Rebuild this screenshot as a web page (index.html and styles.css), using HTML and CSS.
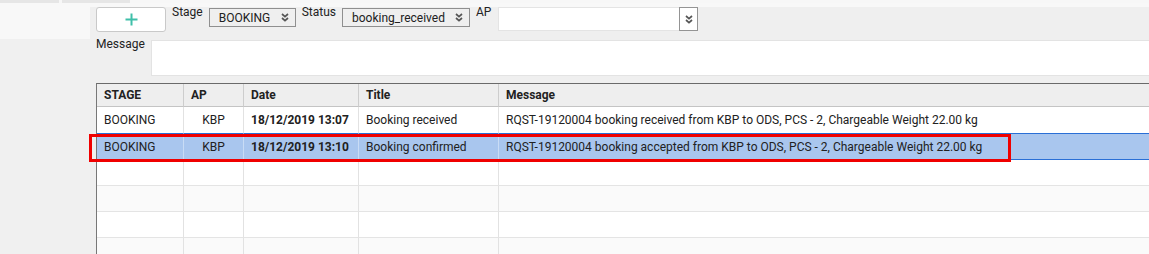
FILE: index.html
```html
<!DOCTYPE html>
<html lang="en">
<head>
<meta charset="utf-8">
<title>Booking events</title>
<link rel="stylesheet" href="styles.css">
</head>
<body>
<div class="app">
  <div class="tabstrip">
    <div class="tab tab-a"></div>
    <div class="tab tab-b"></div>
  </div>
  <div class="shell">
    <aside class="sidebar"><div class="side-top"></div></aside>
    <main class="main">
      <div class="strip"></div>
      <div class="panel">
        <div class="filters">
          <button class="add-btn" type="button" aria-label="Add">
            <svg width="13" height="13" viewBox="0 0 13 13"><path d="M6.5 0.5V12.5M0.5 6.5H12.5" stroke="#3fbfa9" stroke-width="2" fill="none"/></svg>
          </button>
          <span class="label">Stage</span>
          <div class="select sel-stage"><span>BOOKING</span><svg class="chev" width="8" height="9" viewBox="0 0 8 9"><path d="M1 1L4 3.6L7 1M1 5L4 7.6L7 5" stroke="#555" stroke-width="1.7" fill="none"/></svg></div>
          <span class="label">Status</span>
          <div class="select sel-status"><span>booking_received</span><svg class="chev" width="8" height="9" viewBox="0 0 8 9"><path d="M1 1L4 3.6L7 1M1 5L4 7.6L7 5" stroke="#555" stroke-width="1.7" fill="none"/></svg></div>
          <span class="label">AP</span>
          <div class="combo">
            <div class="combo-field"></div>
            <div class="combo-btn"><svg class="chev" width="8" height="9" viewBox="0 0 8 9"><path d="M1 1L4 3.6L7 1M1 5L4 7.6L7 5" stroke="#555" stroke-width="1.7" fill="none"/></svg></div>
          </div>
        </div>
        <div class="message-row">
          <span class="label msg-label">Message</span>
          <div class="textarea"></div>
        </div>
        <div class="grid-wrap">
          <table class="grid">
            <colgroup>
              <col class="c-stage"><col class="c-ap"><col class="c-date"><col class="c-title"><col class="c-msg">
            </colgroup>
            <thead>
              <tr><th>STAGE</th><th>AP</th><th>Date</th><th>Title</th><th class="last">Message</th></tr>
            </thead>
            <tbody>
              <tr><td>BOOKING</td><td class="ap">KBP</td><td class="date">18/12/2019 13:07</td><td>Booking received</td><td class="last">RQST-19120004 booking received from KBP to ODS, PCS - 2, Chargeable Weight 22.00 kg</td></tr>
              <tr class="selected"><td>BOOKING</td><td class="ap">KBP</td><td class="date">18/12/2019 13:10</td><td>Booking confirmed</td><td class="last">RQST-19120004 booking accepted from KBP to ODS, PCS - 2, Chargeable Weight 22.00 kg</td></tr>
              <tr><td></td><td></td><td></td><td></td><td class="last"></td></tr>
              <tr><td></td><td></td><td></td><td></td><td class="last"></td></tr>
              <tr><td></td><td></td><td></td><td></td><td class="last"></td></tr>
              <tr><td></td><td></td><td></td><td></td><td class="last"></td></tr>
            </tbody>
          </table>
        </div>
      </div>
    </main>
  </div>
  <div class="annotation"></div>
</div>
</body>
</html>
```

FILE: styles.css
```css
* { box-sizing: border-box; }
html, body { margin: 0; padding: 0; }
body {
  background: #f0f0f0;
  font-family: Roboto, "Liberation Sans", Arial, sans-serif;
  font-size: 12px;
  color: #212121;
  width: 1149px;
  height: 254px;
  overflow: hidden;
}
.app { position: relative; height: 254px; }

.tabstrip {
  height: 3px;
  background: #f7f7f7;
  display: flex;
  gap: 3px;
}
.tab { height: 3px; background: #e6e6e6; }
.tab-a { width: 59px; }
.tab-b { width: 68px; }

.shell { display: flex; height: 251px; }
.sidebar { width: 90px; flex: none; background: #f0f0f0; }
.side-top { height: 36px; background: #f8f8f8; }

.main { flex: 1; display: flex; flex-direction: column; min-width: 0; }
.strip { height: 4px; background: #f8f8f8; flex: none; }
.panel { flex: 1; background: #efefef; padding-left: 6px; }

.filters {
  height: 30px;
  display: flex;
  align-items: flex-start;
  gap: 6px;
}
.label { line-height: 10px; color: #222; }
.add-btn {
  width: 70px;
  height: 25px;
  background: #fff;
  border: 1px solid #c9c9c9;
  border-radius: 3px;
  padding: 0;
  display: flex;
  align-items: center;
  justify-content: center;
}
.select {
  margin-top: 1px;
  height: 19px;
  background: #efefef;
  border: 1px solid #8f8f8f;
  display: flex;
  align-items: center;
  justify-content: space-between;
  padding: 0 6px 0 9px;
  line-height: 14px;
}
.sel-stage { width: 87px; }
.sel-status { width: 128px; padding-right: 6px; }
.chev { display: block; }
.combo {
  margin-left: 1px;
  width: 200px;
  height: 24px;
  display: flex;
  background: #fff;
  border: 1px solid #e4e4e4;
  border-right: none;
}
.combo-field { flex: 1; }
.combo-btn {
  width: 19px;
  margin-top: -1px;
  height: 24px;
  border: 1px solid #949494;
  background: #fff;
  display: flex;
  align-items: center;
  justify-content: center;
}

.message-row {
  display: flex;
  align-items: flex-start;
  height: 39px;
}
.msg-label { line-height: 14px; width: 55px; flex: none; }
.textarea {
  margin-top: 3px;
  flex: 1;
  height: 36px;
  background: #fff;
  border: 1px solid #e3e3e3;
  border-right: none;
}

.grid-wrap {
  margin-top: 7px;
  overflow: hidden;
}
.grid {
  width: 100%;
  border-collapse: separate;
  border-spacing: 0;
  table-layout: fixed;
  border-top: 1px solid #6a6a6a;
  border-left: 1px solid #777;
  background: #fff;
}
.c-stage { width: 87px; }
.c-ap { width: 60px; }
.c-date { width: 115px; }
.c-title { width: 140px; }
.grid th {
  height: 23px;
  background: #eeeeee;
  font-weight: 700;
  text-align: left;
  padding: 0 7px;
  border-right: 1px solid #cdcdcd;
  border-bottom: 1px solid #c4c4c4;
  white-space: nowrap;
  color: #222;
}
.grid td {
  height: 26px;
  padding: 0 7px;
  border-right: 1px solid #e2e2e2;
  border-bottom: 1px solid #e4e4e4;
  white-space: nowrap;
  overflow: hidden;
}
.grid tbody tr:first-child td { height: 27px; }
.grid th.last, .grid td.last { border-right: none; }
.grid tbody tr:nth-child(even) td { background: #fafafa; }
.grid td.ap { text-align: center; }
.grid td.date { font-weight: 700; }
.grid tr:has(+ tr.selected) td { border-bottom-color: #2a6fd6; }
.grid tbody tr.selected td {
  background: #a9c6ee;
  border-bottom-color: #2a6fd6;
  border-right-color: #c9dcf5;
}

.annotation {
  position: absolute;
  left: 89px;
  top: 134px;
  width: 922px;
  height: 28px;
  border: 3px solid #f00000;
  pointer-events: none;
}
```
